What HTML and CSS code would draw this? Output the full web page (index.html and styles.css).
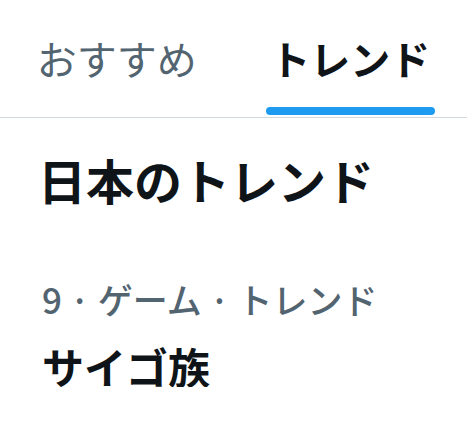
FILE: index.html
```html
<!DOCTYPE html>
<html lang="ja">
<head>
<meta charset="UTF-8">
<meta name="viewport" content="width=device-width, initial-scale=1.0">
<title>トレンド</title>
<link rel="stylesheet" href="styles.css">
</head>
<body>

<nav class="tabs">
  <div class="tab">
    <span class="tab-label">おすすめ</span>
  </div>
  <div class="tab active">
    <span class="tab-label">トレンド</span>
    <span class="tab-indicator"></span>
  </div>
</nav>

<section class="trends">
  <h2 class="trends-title">日本のトレンド</h2>

  <div class="trend">
    <div class="trend-meta">9 · ゲーム · トレンド</div>
    <div class="trend-name">サイゴ族</div>
  </div>
</section>

</body>
</html>
```

FILE: styles.css
```css
body {
  margin: 0;
  font-family: "Noto Sans CJK JP", "Noto Sans", sans-serif;
  background-color: #fff;
  color: #0f1419;
}

.tabs {
  display: flex;
  height: 117px;
  border-bottom: 1px solid #cfd9de;
}

.tab {
  flex: 1;
  display: flex;
  flex-direction: column;
  align-items: center;
}

.tab-label {
  padding-top: 38px;
  font-size: 40px;
  line-height: 1;
  color: #536471;
}

.tab.active .tab-label {
  font-weight: 700;
  color: #0f1419;
}

.tab-indicator {
  margin-top: auto;
  margin-bottom: 2px;
  width: 169px;
  height: 8px;
  border-radius: 4px;
  background-color: #1d9bf0;
}

.trends {
  padding: 0 38px;
}

.trends-title {
  margin: 0;
  padding-top: 37px;
  font-size: 48px;
  line-height: 1;
  font-weight: 700;
}

.trend {
  padding-top: 78px;
}

.trend-meta {
  font-size: 35px;
  line-height: 1;
  font-weight: 500;
  color: #536471;
  padding-left: 4px;
}

.trend-name {
  margin-top: 29px;
  padding-left: 4px;
  font-size: 42px;
  line-height: 1;
  font-weight: 700;
}
```
